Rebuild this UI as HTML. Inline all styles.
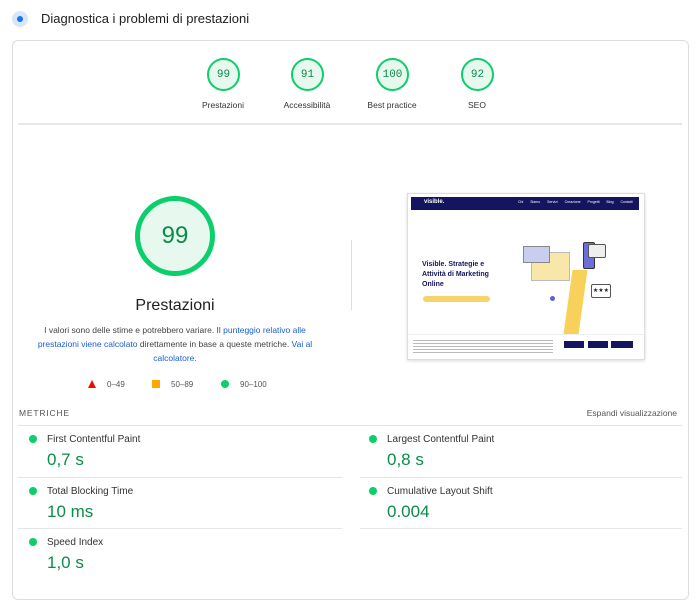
<!DOCTYPE html>
<html><head><style>
body{margin:0;width:700px;height:578px;overflow:hidden;background:#fff;font-family:"Liberation Sans",sans-serif;color:#202124;position:relative}
.a{position:absolute}
.g{position:absolute;border-radius:50%;border:2.5px solid #0cce6b;background:#e7f8ee;box-sizing:border-box;display:flex;align-items:center;justify-content:center;color:#0a8c48;font-family:"Liberation Mono",monospace}
.lbl{position:absolute;font-size:8.5px;color:#333;text-align:center;width:100px}
.ml{position:absolute;font-size:10px;color:#333}
.mv{position:absolute;font-size:17px;color:#0a8c48}
.dot{position:absolute;width:8px;height:8px;border-radius:50%;background:#0cce6b}
.hl{position:absolute;height:1px;background:#e5e5e5}
a{color:#1a5fd1;text-decoration:none}
</style></head><body>
<div class="a" style="left:12px;top:11px;width:16px;height:16px;border-radius:50%;background:#d6e6fb"></div>
<div class="a" style="left:17px;top:16px;width:6px;height:6px;border-radius:50%;background:#1a73e8"></div>
<div class="a" style="left:41px;top:11px;font-size:13px;color:#202124">Diagnostica i problemi di prestazioni</div>
<div class="a" style="left:12px;top:40px;width:677px;height:560px;border:1px solid #ddd;border-radius:6px;box-sizing:border-box"></div>
<div class="g" style="left:207px;top:58px;width:33px;height:33px;font-size:11px">99</div>
<div class="g" style="left:291px;top:58px;width:33px;height:33px;font-size:11px">91</div>
<div class="g" style="left:376px;top:58px;width:33px;height:33px;font-size:11px">100</div>
<div class="g" style="left:461px;top:58px;width:33px;height:33px;font-size:11px">92</div>
<div class="lbl" style="left:173px;top:100px">Prestazioni</div>
<div class="lbl" style="left:257px;top:100px">Accessibilità</div>
<div class="lbl" style="left:342px;top:100px">Best practice</div>
<div class="lbl" style="left:427px;top:100px">SEO</div>
<div class="hl" style="left:18px;top:123px;width:664px;height:2px;background:#e8e8e8"></div>
<div class="g" style="left:135px;top:196px;width:80px;height:80px;border-width:5px;font-size:24px;font-family:'Liberation Sans',sans-serif;color:#0a8c48">99</div>
<div class="a" style="left:75px;top:297px;width:200px;text-align:center;font-size:16px">Prestazioni</div>
<div class="a" style="left:35px;top:323px;width:280px;text-align:center;font-size:8.5px;line-height:14px;color:#444">I valori sono delle stime e potrebbero variare. Il <a>punteggio relativo alle prestazioni viene calcolato</a> direttamente in base a queste metriche. <a>Vai al calcolatore.</a></div>
<div class="a" style="left:88px;top:380px;width:0;height:0;border-left:4.5px solid transparent;border-right:4.5px solid transparent;border-bottom:8px solid #eb0f00"></div>
<div class="a" style="left:107px;top:380px;font-size:8px;color:#555">0–49</div>
<div class="a" style="left:152px;top:380px;width:8px;height:8px;background:#ffa400"></div>
<div class="a" style="left:171px;top:380px;font-size:8px;color:#555">50–89</div>
<div class="a" style="left:221px;top:380px;width:8px;height:8px;border-radius:50%;background:#0cce6b"></div>
<div class="a" style="left:240px;top:380px;font-size:8px;color:#555">90–100</div>
<div class="a" style="left:351px;top:240px;width:1px;height:70px;background:#ddd"></div>
<div class="a" style="left:407px;top:193px;width:236px;height:165px;border:1px solid #ddd;box-shadow:0 1px 3px rgba(0,0,0,.15);background:#fff;overflow:hidden">
 <div class="a" style="left:3px;top:3px;width:228px;height:13px;background:#14155e"></div>
 <div class="a" style="left:16px;top:5px;font-size:6px;color:#fff;font-weight:bold">visible.</div>
 <div class="a" style="left:110px;top:6px;font-size:3.5px;color:#fff;word-spacing:6px">Chi Siamo Servizi Creazione Progetti Blog Contatti</div>
 <div class="a" style="left:14px;top:66px;font-size:7px;font-weight:bold;color:#14155e;line-height:10px;width:80px">Visible. Strategie e Attività di Marketing Online</div>
 <div class="a" style="left:15px;top:102px;width:67px;height:6px;border-radius:3px;background:#f6d46a"></div>
 <div class="a" style="left:123px;top:58px;width:37px;height:27px;background:#f8e7a8;border:1px solid #bbb"></div>
 <div class="a" style="left:115px;top:52px;width:25px;height:15px;background:#c9cdf0;border:1px solid #888"></div>
 <div class="a" style="left:175px;top:48px;width:10px;height:25px;background:#6b70d8;border-radius:2px;border:1px solid #333"></div>
 <div class="a" style="left:160px;top:76px;width:15px;height:64px;background:#f7d15a;transform:skewX(-8deg)"></div>
 <div class="a" style="left:180px;top:50px;width:16px;height:12px;border:1px solid #555;border-radius:2px;background:#eee"></div>
 <div class="a" style="left:183px;top:90px;width:18px;height:12px;border:1px solid #555;border-radius:2px;background:#fff;font-size:6px;text-align:center;line-height:12px">★★★</div>
 <div class="a" style="left:142px;top:102px;width:5px;height:5px;border-radius:50%;background:#5b62d6"></div>
 <div class="a" style="left:0;top:140px;width:236px;height:25px;background:#fff;border-top:1px solid #eee"></div>
 <div class="a" style="left:5px;top:145px;width:140px;height:15px;background:repeating-linear-gradient(#fff 0 1px,#bbb 1px 2px,#fff 2px 3px)"></div>
 <div class="a" style="left:156px;top:147px;width:20px;height:7px;background:#14155e"></div>
 <div class="a" style="left:180px;top:147px;width:20px;height:7px;background:#14155e"></div>
 <div class="a" style="left:203px;top:147px;width:22px;height:7px;background:#14155e"></div>
</div>
<div class="a" style="left:19px;top:408px;font-size:8.5px;letter-spacing:.8px;color:#555">METRICHE</div>
<div class="a" style="left:560px;top:408px;width:117px;text-align:right;font-size:8.5px;color:#555">Espandi visualizzazione</div>
<div class="hl" style="left:18px;top:425px;width:664px"></div>
<div class="dot" style="left:29px;top:435px"></div><div class="ml" style="left:47px;top:434px">First Contentful Paint</div><div class="mv" style="left:47px;top:450px">0,7 s</div>
<div class="dot" style="left:369px;top:435px"></div><div class="ml" style="left:387px;top:434px">Largest Contentful Paint</div><div class="mv" style="left:387px;top:450px">0,8 s</div>
<div class="hl" style="left:18px;top:477px;width:324px"></div><div class="hl" style="left:360px;top:477px;width:322px"></div>
<div class="dot" style="left:29px;top:487px"></div><div class="ml" style="left:47px;top:486px">Total Blocking Time</div><div class="mv" style="left:47px;top:502px">10 ms</div>
<div class="dot" style="left:369px;top:487px"></div><div class="ml" style="left:387px;top:486px">Cumulative Layout Shift</div><div class="mv" style="left:387px;top:502px">0.004</div>
<div class="hl" style="left:18px;top:528px;width:324px"></div><div class="hl" style="left:360px;top:528px;width:322px"></div>
<div class="dot" style="left:29px;top:538px"></div><div class="ml" style="left:47px;top:537px">Speed Index</div><div class="mv" style="left:47px;top:553px">1,0 s</div>
</body></html>
